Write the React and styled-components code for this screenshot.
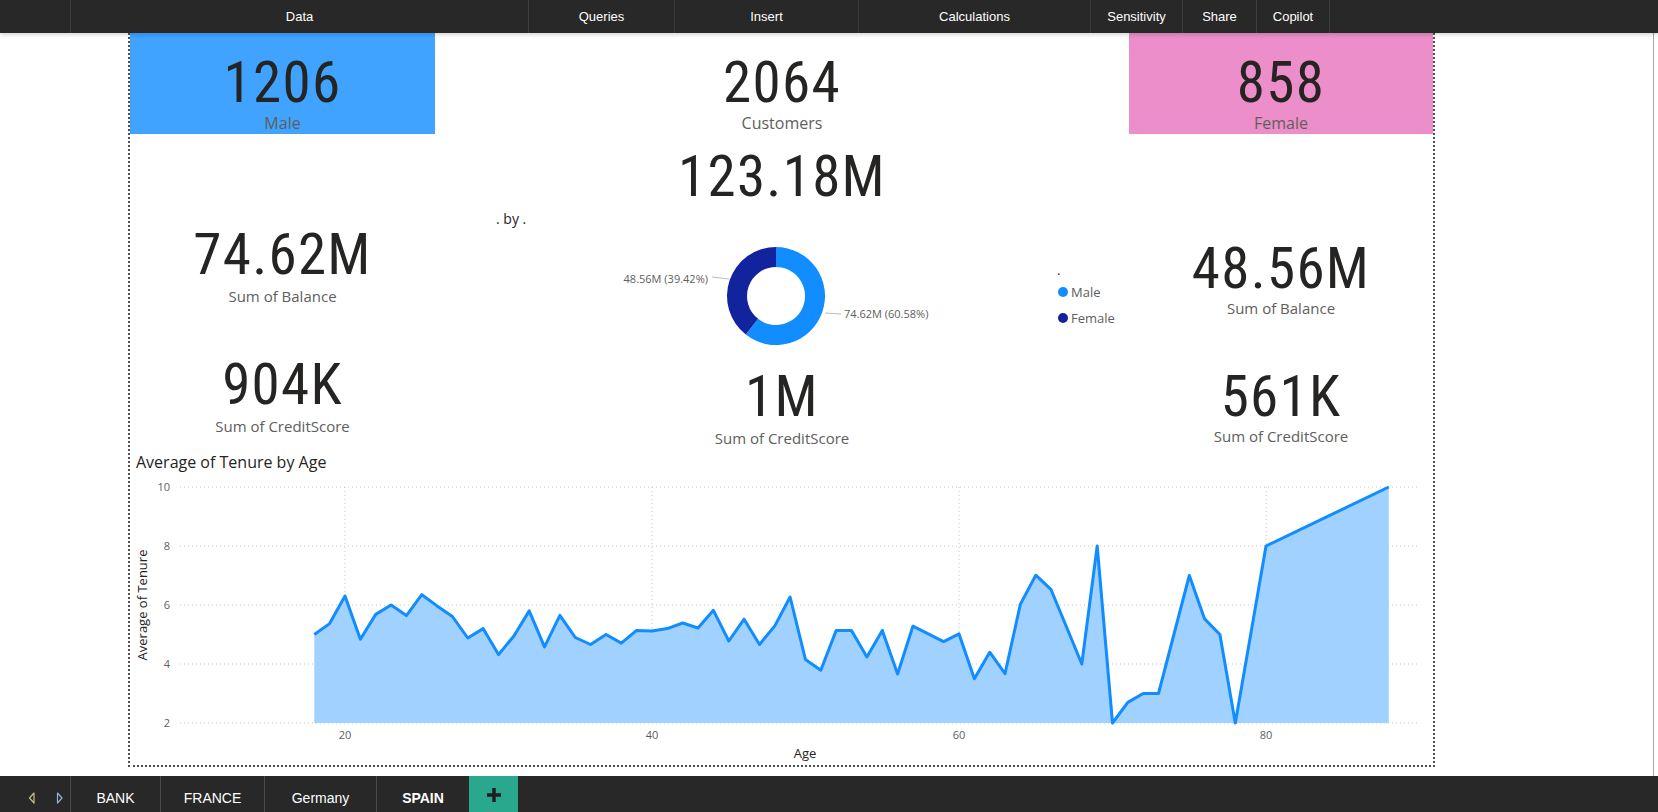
import React from 'react'
import styled, { createGlobalStyle } from 'styled-components'

const GlobalStyle = createGlobalStyle`
  html, body {
    margin: 0;
    padding: 0;
    background: #fff;
  }
  body {
    font-family: "Segoe UI", "Open Sans", sans-serif;
    overflow: hidden;
  }
`

const Shell = styled.div`
  display: flex;
  flex-direction: column;
  width: 1658px;
  height: 812px;
  background: #fff;
`

const TopBar = styled.nav`
  display: flex;
  flex-shrink: 0;
  height: 33px;
  background: #282828;
  position: relative;
  z-index: 2;
  box-shadow: 0 2px 4px rgba(0, 0, 0, 0.16);
`

const NavItem = styled.div`
  width: ${p => p.$w}px;
  box-sizing: border-box;
  display: flex;
  align-items: center;
  justify-content: center;
  border-right: 1px solid #3d3d3d;
  color: #fff;
  font: 13px "Segoe UI", "Liberation Sans", sans-serif;
`

const Main = styled.div`
  flex: 1;
  display: flex;
  min-height: 0;
`

const Viewport = styled.div`
  width: 1654px;
  box-sizing: border-box;
  padding-left: 128px;
  border-right: 1px solid #a8a8a8;
`

const Canvas = styled.div`
  display: flex;
  flex-direction: column;
  width: 1303px;
  height: 732px;
  border: 2px dotted #4f4f4f;
  border-top: none;
`

const MidArea = styled.div`
  display: grid;
  grid-template-columns: 305px 694px 304px;
  height: 416px;
  align-items: start;
`

const Column = styled.div`
  display: flex;
  flex-direction: column;
`

const Kpi = styled.div`
  display: flex;
  flex-direction: column;
  align-items: center;
  box-sizing: border-box;
  height: ${p => (p.$h ? `${p.$h}px` : 'auto')};
  padding-top: ${p => p.$pt}px;
  background: ${p => p.$bg || 'transparent'};
`

const KpiValue = styled.div`
  font-family: "Roboto Condensed", "Roboto", sans-serif;
  font-size: 57px;
  line-height: 57px;
  letter-spacing: 1.3px;
  color: #252423;
`

const KpiLabel = styled.div`
  margin-top: ${p => p.$mt ?? 4}px;
  font-size: ${p => p.$size || 15}px;
  line-height: 18px;
  color: #605e5c;
`

const DonutVisual = styled.div`
  display: flex;
  flex-direction: column;
`

const VisualTitle = styled.div`
  margin-top: ${p => p.$mt || 0}px;
  padding-left: ${p => p.$pl}px;
  font-size: ${p => p.$size}px;
  line-height: ${p => p.$lh}px;
  color: #252423;
`

const ChartVisual = styled.div`
  display: flex;
  flex-direction: column;
  padding-top: 3px;
  flex: 1;
`

const ChartSvg = styled.svg`
  display: block;
  font-family: "Segoe UI", "Open Sans", sans-serif;
`

const TabBar = styled.div`
  display: flex;
  flex-shrink: 0;
  height: 36px;
  background: #282828;
`

const Arrows = styled.div`
  display: flex;
  align-items: center;
  gap: 20px;
  width: 70px;
  box-sizing: border-box;
  padding: 7px 0 0 28px;
`

const Tab = styled.div`
  width: ${p => p.$w}px;
  box-sizing: border-box;
  display: flex;
  align-items: center;
  justify-content: center;
  padding-top: 7px;
  border-left: 1px solid #4a4a4a;
  color: #fff;
  font: ${p => (p.$active ? 700 : 400)} 14px "Segoe UI", "Liberation Sans", sans-serif;
`

const AddTab = styled.div`
  width: 49px;
  display: flex;
  align-items: center;
  justify-content: center;
  padding-top: 2px;
  background: #29a88e;
`

const navItems = [
  ['', 71],
  ['Data', 458],
  ['Queries', 146],
  ['Insert', 184],
  ['Calculations', 232],
  ['Sensitivity', 92],
  ['Share', 74],
  ['Copilot', 73],
]

const tabs = [
  ['BANK', 90],
  ['FRANCE', 104],
  ['Germany', 112],
  ['SPAIN', 93, true],
]

const tenure = [
  [18, 5.0], [19, 5.37], [20, 6.3], [21, 4.84], [22, 5.68], [23, 6.0], [24, 5.64],
  [25, 6.35], [26, 5.97], [27, 5.61], [28, 4.88], [29, 5.2], [30, 4.32], [31, 4.95],
  [32, 5.8], [33, 4.58], [34, 5.65], [35, 4.9], [36, 4.66], [37, 5.0], [38, 4.71],
  [39, 5.14], [40, 5.12], [41, 5.2], [42, 5.39], [43, 5.22], [44, 5.82], [45, 4.78],
  [46, 5.52], [47, 4.66], [48, 5.29], [49, 6.27], [50, 4.15], [51, 3.79], [52, 5.14],
  [53, 5.14], [54, 4.24], [55, 5.14], [56, 3.66], [57, 5.28], [58, 5.02], [59, 4.76],
  [60, 5.02], [61, 3.5], [62, 4.4], [63, 3.67], [64, 6.03], [65, 7.01], [66, 6.52],
  [67, 5.26], [68, 4.0], [69, 8.0], [70, 2.0], [71, 2.7], [72, 3.0], [73, 3.0],
  [74, 5.0], [75, 7.0], [76, 5.53], [77, 5.0], [78, 2.0], [79, 5.0], [80, 8.0], [88, 10.0],
]

const xOf = age => 345 + (age - 20) * 15.35
const yOf = v => 723 - (v - 2) * 29.5

function TenureChart() {
  const line = tenure.map(([a, v]) => `${xOf(a).toFixed(1)},${yOf(v).toFixed(1)}`).join(' ')
  const area = `${xOf(18)},${yOf(2)} ${line} ${xOf(88)},${yOf(2)}`
  return (
    <ChartSvg width="1303" height="293" viewBox="130 472 1303 293">
      {[10, 8, 6, 4, 2].map(v => (
        <g key={v}>
          <line x1="180" x2="1419" y1={yOf(v)} y2={yOf(v)} stroke="#c8c6c4" strokeDasharray="1 3" />
          <text x="170" y={yOf(v)} dy="4" textAnchor="end" fontSize="11" fill="#605e5c">{v}</text>
        </g>
      ))}
      {[20, 40, 60, 80].map(a => (
        <g key={a}>
          <line x1={xOf(a)} x2={xOf(a)} y1="487" y2="723" stroke="#c8c6c4" strokeDasharray="1 3" />
          <text x={xOf(a)} y="739" textAnchor="middle" fontSize="11" fill="#605e5c">{a}</text>
        </g>
      ))}
      <polygon points={area} fill="#a0d1ff" />
      <polyline points={line} fill="none" stroke="#118dff" strokeWidth="3" strokeLinejoin="round" />
      <text x="143" y="605" dy="4" textAnchor="middle" fontSize="13" fill="#252423" transform="rotate(-90 143 605)">
        Average of Tenure
      </text>
      <text x="805" y="758" textAnchor="middle" fontSize="13" fill="#252423">Age</text>
    </ChartSvg>
  )
}

const CX = 776
const CY = 296
const R0 = 29
const R1 = 49

const polar = (r, deg) => {
  const a = (deg * Math.PI) / 180
  return [CX + r * Math.sin(a), CY - r * Math.cos(a)]
}

const ring = (a0, a1) => {
  const [x0, y0] = polar(R1, a0)
  const [x1, y1] = polar(R1, a1)
  const [x2, y2] = polar(R0, a1)
  const [x3, y3] = polar(R0, a0)
  const large = a1 - a0 > 180 ? 1 : 0
  return `M${x0} ${y0} A${R1} ${R1} 0 ${large} 1 ${x1} ${y1} L${x2} ${y2} A${R0} ${R0} 0 ${large} 0 ${x3} ${y3} Z`
}

function GenderDonut() {
  const split = 360 * 0.6058
  return (
    <ChartSvg width="694" height="127" viewBox="435 228 694 127">
      <path d={ring(0, split)} fill="#118dff" />
      <path d={ring(split, 359.99)} fill="#12239e" />
      <polyline points="712,277 729,279" fill="none" stroke="#bebbb8" />
      <text x="708" y="279" dy="4" textAnchor="end" fontSize="11" fill="#605e5c">48.56M (39.42%)</text>
      <polyline points="825,313 841,314" fill="none" stroke="#bebbb8" />
      <text x="844" y="314" dy="4" fontSize="11" fill="#605e5c">74.62M (60.58%)</text>
      <text x="1057" y="275" fontSize="13" fill="#252423">.</text>
      <circle cx="1063" cy="292" r="5" fill="#118dff" />
      <text x="1071" y="292" dy="4.5" fontSize="13" fill="#605e5c">Male</text>
      <circle cx="1063" cy="318" r="5" fill="#12239e" />
      <text x="1071" y="318" dy="4.5" fontSize="13" fill="#605e5c">Female</text>
    </ChartSvg>
  )
}

function Card({ value, label, pt, h, bg, labelSize, labelGap }) {
  return (
    <Kpi $pt={pt} $h={h} $bg={bg}>
      <KpiValue>{value}</KpiValue>
      {label && <KpiLabel $size={labelSize} $mt={labelGap}>{label}</KpiLabel>}
    </Kpi>
  )
}

function Arrow({ dir, color }) {
  const pts = dir === 'left' ? '6,1 1.5,6 6,11' : '1.5,1 6,6 1.5,11'
  return (
    <svg width="8" height="12" viewBox="0 0 8 12">
      <polygon points={pts} fill="none" stroke={color} strokeWidth="1.2" strokeLinejoin="round" />
    </svg>
  )
}

export default function App() {
  return (
    <Shell>
      <GlobalStyle />
      <TopBar>
        {navItems.map(([name, w], i) => (
          <NavItem key={i} $w={w}>{name}</NavItem>
        ))}
      </TopBar>
      <Main>
        <Viewport>
          <Canvas>
            <MidArea>
              <Column>
                <Card value="1206" label="Male" pt={21} h={101} bg="#3fa3ff" labelSize={16} labelGap={3} />
                <Card value="74.62M" label="Sum of Balance" pt={92} />
                <Card value="904K" label="Sum of CreditScore" pt={51} />
              </Column>
              <Column>
                <Card value="2064" label="Customers" pt={21} h={101} labelSize={16} labelGap={3} />
                <Card value="123.18M" pt={14} />
                <DonutVisual>
                  <VisualTitle $mt={5} $pl={61} $size={14} $lh={18}>. by .</VisualTitle>
                  <GenderDonut />
                </DonutVisual>
                <Card value="1M" label="Sum of CreditScore" pt={13} />
              </Column>
              <Column>
                <Card value="858" label="Female" pt={21} h={101} bg="#ec8ec9" labelSize={16} labelGap={3} />
                <Card value="48.56M" label="Sum of Balance" pt={106} labelGap={2} />
                <Card value="561K" label="Sum of CreditScore" pt={51} labelGap={2} />
              </Column>
            </MidArea>
            <ChartVisual>
              <VisualTitle $pl={6} $size={16} $lh={20}>Average of Tenure by Age</VisualTitle>
              <TenureChart />
            </ChartVisual>
          </Canvas>
        </Viewport>
      </Main>
      <TabBar>
        <Arrows>
          <Arrow dir="left" color="#c9bb8c" />
          <Arrow dir="right" color="#8fb3d6" />
        </Arrows>
        {tabs.map(([name, w, active]) => (
          <Tab key={name} $w={w} $active={active}>{name}</Tab>
        ))}
        <AddTab>
          <svg width="14" height="14" viewBox="0 0 14 14">
            <rect x="5.25" y="0" width="3.5" height="14" fill="#1e1e1e" />
            <rect x="0" y="5.25" width="14" height="3.5" fill="#1e1e1e" />
          </svg>
        </AddTab>
      </TabBar>
    </Shell>
  )
}
